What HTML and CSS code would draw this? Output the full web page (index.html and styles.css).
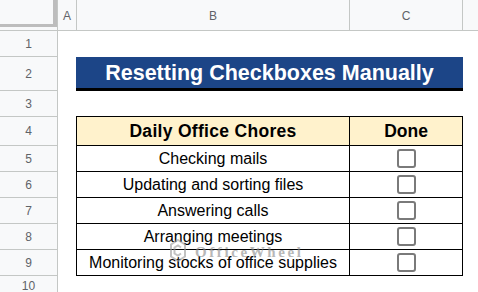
FILE: index.html
```html
<!DOCTYPE html>
<html>
  <head>
    <meta charset="UTF-8" />
    <title>Resetting Checkboxes Manually</title>
    <link rel="stylesheet" href="styles.css">
  </head>

  <body>
    <div class="sheet">
      <div class="colheads">
        <div class="corner"><div class="corner-bar"></div></div>
        <div class="colhead col-a">A</div>
        <div class="colhead col-b">B</div>
        <div class="colhead col-c">C</div>
        <div class="colhead col-d"></div>
      </div>

      <div class="grid">
        <div class="rownums">
          <div class="rownum r-short">1</div>
          <div class="rownum r-title">2</div>
          <div class="rownum">3</div>
          <div class="rownum r-head">4</div>
          <div class="rownum">5</div>
          <div class="rownum">6</div>
          <div class="rownum">7</div>
          <div class="rownum">8</div>
          <div class="rownum">9</div>
          <div class="rownum r-last">10</div>
        </div>

        <div class="cells">
          <div class="title">Resetting Checkboxes Manually</div>

          <div class="chores">
            <div class="chores-row chores-head">
              <div class="task">Daily Office Chores</div>
              <div class="done">Done</div>
            </div>
            <div class="chores-row">
              <div class="task">Checking mails</div>
              <div class="done"><span class="checkbox"></span></div>
            </div>
            <div class="chores-row">
              <div class="task">Updating and sorting files</div>
              <div class="done"><span class="checkbox"></span></div>
            </div>
            <div class="chores-row">
              <div class="task">Answering calls</div>
              <div class="done"><span class="checkbox"></span></div>
            </div>
            <div class="chores-row">
              <div class="task">Arranging meetings</div>
              <div class="done"><span class="checkbox"></span></div>
            </div>
            <div class="chores-row">
              <div class="task">Monitoring stocks of office supplies</div>
              <div class="done"><span class="checkbox"></span></div>
            </div>
          </div>

          <div class="watermark">
            <svg class="wm-logo" width="16" height="23" viewBox="0 0 16 23">
              <path d="M8 1 L15 5.5 L15 17.5 L8 22 L1 17.5 L1 5.5 Z" fill="none" stroke="#9a9a9a" stroke-width="2"/>
              <path d="M11 8.5 L8 6.5 L4.5 8.5 L4.5 14.5 L8 16.5 L11 14.5" fill="none" stroke="#9a9a9a" stroke-width="2"/>
            </svg>
            <span class="wm-text">OfficeWheel</span>
          </div>
        </div>
      </div>
    </div>
  </body>
</html>
```

FILE: styles.css
```css
* {
  box-sizing: border-box;
}

body {
  margin: 0;
  padding: 0;
  font-family: "Liberation Sans", Arial, sans-serif;
  background: #fff;
}

.sheet {
  width: 478px;
  height: 292px;
  overflow: hidden;
}

/* column headers */
.colheads {
  display: flex;
  height: 31px;
  background: #f8f9fa;
  border-bottom: 1px solid #c4c7c5;
}

.corner {
  width: 58px;
  border-right: 1px solid #c4c7c5;
}

.corner-bar {
  width: 57px;
  height: 27px;
  border-right: 4px solid #bdbdbd;
  border-bottom: 3px solid #bdbdbd;
}

.colhead {
  display: flex;
  align-items: center;
  justify-content: center;
  font-size: 12px;
  color: #5f6368;
  border-right: 1px solid #c4c7c5;
  padding-top: 1px;
}

.col-a {
  width: 19px;
}

.col-b {
  width: 273px;
}

.col-c {
  width: 113px;
}

.col-d {
  flex: 1;
  border-right: none;
}

/* body */
.grid {
  display: flex;
}

.rownums {
  width: 58px;
  background: #f8f9fa;
  border-right: 1px solid #c4c7c5;
}

.rownum {
  height: 26px;
  display: flex;
  align-items: center;
  justify-content: center;
  font-size: 12px;
  color: #5f6368;
  border-bottom: 1px solid #c4c7c5;
}

.r-title {
  height: 34px;
}

.r-head {
  height: 29px;
}

.r-last {
  height: 20px;
  border-bottom: none;
}

.cells {
  position: relative;
  flex: 1;
}

.title {
  margin: 26px 0 0 18px;
  width: 387px;
  height: 34px;
  background: #1c4587;
  border-bottom: 3px solid #000;
  color: #fff;
  font-size: 21.5px;
  font-weight: bold;
  display: flex;
  align-items: center;
  justify-content: center;
  padding-top: 1px;
}

.chores {
  margin: 25px 0 0 18px;
  width: 387px;
  border: 1px solid #000;
}

.chores-row {
  display: flex;
  height: 26px;
  border-bottom: 1px solid #000;
  font-size: 16px;
  color: #000;
}

.chores-row:last-child {
  height: 25px;
  border-bottom: none;
}

.chores-head {
  height: 29px;
  background: #fff2cc;
  font-size: 17.5px;
  font-weight: bold;
}

.chores-head .task {
  letter-spacing: 0.3px;
}

.task {
  width: 273px;
  border-right: 1px solid #000;
  display: flex;
  align-items: center;
  justify-content: center;
}

.done {
  flex: 1;
  display: flex;
  align-items: center;
  justify-content: center;
}

.checkbox {
  width: 19px;
  height: 19px;
  border: 2px solid #7a7a7a;
  border-radius: 3px;
  margin-left: 1px;
}

/* faint watermark over the table */
.watermark {
  position: absolute;
  left: 112px;
  top: 208px;
  display: flex;
  align-items: center;
  gap: 9px;
  opacity: 0.6;
  pointer-events: none;
}

.wm-text {
  font-family: "Liberation Serif", "Times New Roman", serif;
  font-size: 15px;
  font-weight: bold;
  letter-spacing: 2.6px;
  color: #8a8a8a;
  margin-top: 4px;
}
```
